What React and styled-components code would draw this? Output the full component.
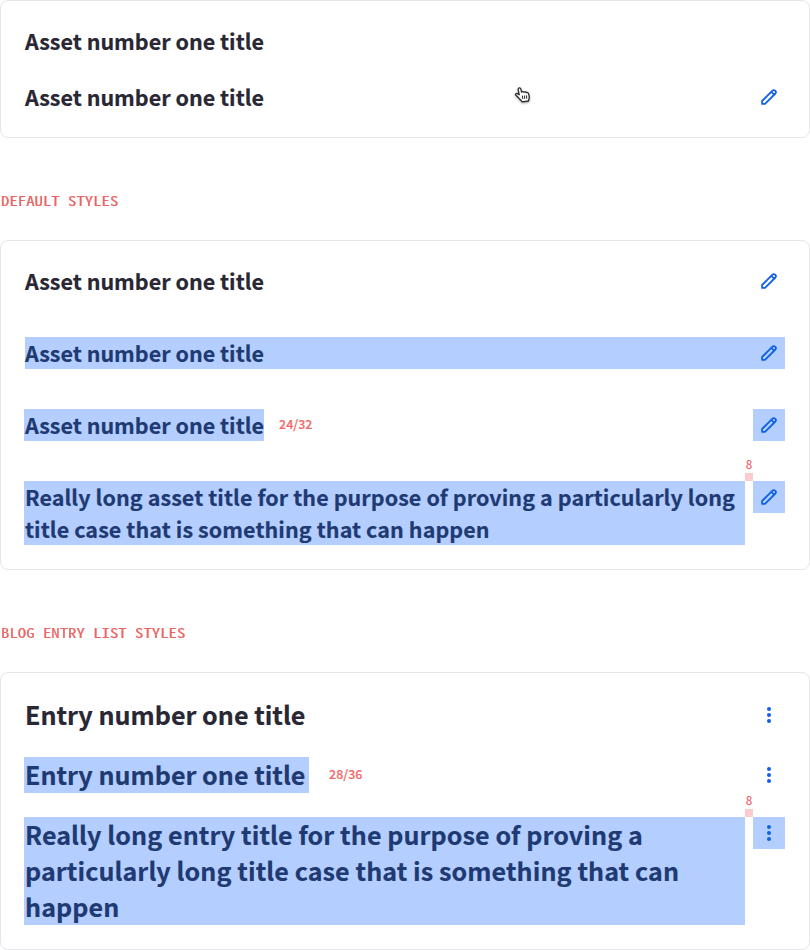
import React from 'react';
import styled, { createGlobalStyle } from 'styled-components';

const GlobalStyle = createGlobalStyle`
  * { box-sizing: border-box; }
  body { margin: 0; background: #fff; }
`;

const sans = `'Noto Sans CJK JP', 'Open Sans', sans-serif`;

const Page = styled.main`
  width: 810px;
  height: 950px;
  display: flex;
  flex-direction: column;
  overflow: hidden;
  font-family: ${sans};
`;

const Card = styled.section`
  position: relative;
  flex: none;
  display: flex;
  flex-direction: column;
  gap: ${(p) => p.$gap}px;
  padding: 24px;
  border: 1px solid #e6e6eb;
  border-radius: 8px;
  background: #fff;
`;

const SectionLabel = styled.h2`
  flex: none;
  height: 102px;
  margin: 0;
  padding: 51px 0 0 1px;
  line-height: 24px;
  font-family: 'Noto Sans Mono CJK JP', 'Liberation Mono', monospace;
  font-size: 16.75px;
  font-weight: 400;
  color: #ec6464;
  white-space: pre;
`;

const LabelText = styled.span`
  display: inline-block;
  transform: scaleY(0.74);
  transform-origin: 0 53%;
  -webkit-text-stroke: 0.3px #ec6464;
`;

const Row = styled.div`
  position: relative;
  display: flex;
  align-items: ${(p) => (p.$top ? 'flex-start' : 'center')};
  background: ${(p) => (p.$filled ? '#b4cfff' : 'transparent')};
`;

const Title = styled.h3`
  flex: none;
  margin: 0 0 0 -1px;
  padding-left: 1px;
  width: ${(p) => (p.$width ? `${p.$width}px` : 'auto')};
  font-size: ${(p) => (p.$large ? 25.1 : 21.5)}px;
  line-height: ${(p) => (p.$large ? 36 : 32)}px;
  font-weight: 700;
  letter-spacing: ${(p) => (p.$long ? 0.072 : 0)}px;
  white-space: nowrap;
  color: ${(p) => (p.$marked ? '#1f3a73' : '#282733')};
  -webkit-text-stroke: 0.2px currentColor;
  background: ${(p) => (p.$marked && !p.$clear ? '#b4cfff' : 'transparent')};
`;

const Line = styled.span`
  display: block;
  margin-top: ${(p) => (p.$raised ? -1 : 0)}px;
  margin-bottom: ${(p) => (p.$raised ? 1 : 0)}px;
`;

const Metric = styled.span`
  margin-left: ${(p) => p.$gap}px;
  padding-bottom: 2px;
  font-size: 12.5px;
  line-height: 20px;
  font-weight: 500;
  color: #f06868;
  -webkit-text-stroke: 0.15px currentColor;
`;

const IconButton = styled.button`
  display: flex;
  align-items: center;
  justify-content: center;
  width: 32px;
  height: 32px;
  margin: 0 0 0 auto;
  padding: 0;
  border: 0;
  color: #1260e3;
  background: ${(p) => (p.$marked ? '#b4cfff' : 'transparent')};
`;

const GapMarker = styled.div`
  position: absolute;
  right: 32px;
  bottom: 100%;
  width: 8px;
  display: flex;
  flex-direction: column;
  align-items: center;
  font-size: 11.5px;
  line-height: 18px;
  font-weight: 500;
  color: #ee6c70;

  &::after {
    content: '';
    width: 8px;
    height: 8px;
    background: #fccdcf;
  }
`;

const Cursor = styled.svg`
  position: absolute;
  left: 513px;
  top: 85px;
  filter: drop-shadow(0 1px 1px rgba(0, 0, 0, 0.35));
`;

const Pencil = ({ marked }) => (
  <IconButton $marked={marked} aria-label="Edit title">
    <svg width="16" height="16" viewBox="0 0 16 16" fill="none" stroke="currentColor" strokeWidth="1.8" strokeLinejoin="round">
      <path d="M1.1 14.9V12L11.5 1.6C12.2.9 13.3.9 14 1.6L14.4 2C15.1 2.7 15.1 3.8 14.4 4.5L4 14.9Z" />
      <path d="M10.3 2.8L13.2 5.7" />
    </svg>
  </IconButton>
);

const More = ({ marked }) => (
  <IconButton $marked={marked} aria-label="More actions">
    <svg width="16" height="16" viewBox="0 0 16 16" fill="currentColor">
      <circle cx="8" cy="2" r="2" />
      <circle cx="8" cy="8" r="2" />
      <circle cx="8" cy="14" r="2" />
    </svg>
  </IconButton>
);

const Hand = () => (
  <Cursor width="18" height="19" viewBox="0 0 18 19">
    <path
      d="M4.9 12.6C4.1 11.5 3 10.7 2 9.8C1 8.7 2 7.5 3.3 8.1L5.2 9.2L4.2 4.4C3.9 2 6.3 1.6 6.9 3.7L7.6 6.6C8.2 5.8 9.4 5.9 9.9 6.8C10.7 6.1 11.8 6.3 12.3 7.2C13.5 6.7 14.5 7.3 14.7 8.4L15.2 11.1C15.5 13 14.7 13.6 14.5 15.5L8.1 16.3C7.4 14.7 5.9 14.1 4.9 12.6Z"
      transform="translate(0 -0.5)"
      fill="#fff" stroke="#2b2b2b" strokeWidth="1.3" strokeLinejoin="round"
    />
    <path d="M8.4 9.7L8.8 13M10.4 9.5L10.8 12.8M12.4 9.3L12.8 12.6" stroke="#2b2b2b" strokeWidth="1" />
  </Cursor>
);

export default function App() {
  return (
    <>
      <GlobalStyle />
      <Page>
        <Card $gap={24}>
          <Row><Title>Asset number one title</Title></Row>
          <Row><Title>Asset number one title</Title><Pencil /></Row>
          <Hand />
        </Card>

        <SectionLabel><LabelText>DEFAULT STYLES</LabelText></SectionLabel>

        <Card $gap={40}>
          <Row><Title>Asset number one title</Title><Pencil /></Row>
          <Row $filled><Title $marked $clear>Asset number one title</Title><Pencil /></Row>
          <Row>
            <Title $marked $width={240}>Asset number one title</Title>
            <Metric $gap={15}>24/32</Metric>
            <Pencil marked />
          </Row>
          <Row $top>
            <Title $marked $long $width={721}>
              <Line>Really long asset title for the purpose of proving a particularly long </Line>
              <Line>title case that is something that can happen</Line>
            </Title>
            <GapMarker>8</GapMarker>
            <Pencil marked />
          </Row>
        </Card>

        <SectionLabel><LabelText>BLOG ENTRY LIST STYLES</LabelText></SectionLabel>

        <Card $gap={24}>
          <Row><Title $large><Line $raised>Entry number one title</Line></Title><More /></Row>
          <Row>
            <Title $large $marked $width={285}><Line $raised>Entry number one title</Line></Title>
            <Metric $gap={20}>28/36</Metric>
            <More />
          </Row>
          <Row $top>
            <Title $large $marked $long $width={721}>
              <Line $raised>Really long entry title for the purpose of proving a </Line>
              <Line $raised>particularly long title case that is something that can </Line>
              <Line $raised>happen</Line>
            </Title>
            <GapMarker>8</GapMarker>
            <More marked />
          </Row>
        </Card>
      </Page>
    </>
  );
}
